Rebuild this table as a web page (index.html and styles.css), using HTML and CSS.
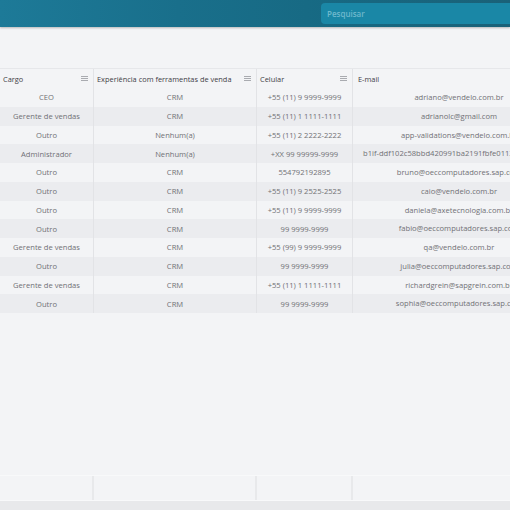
FILE: index.html
```html
<!DOCTYPE html>
<html lang="pt-BR">
<head>
<meta charset="utf-8">
<link rel="stylesheet" href="styles.css">
</head>
<body>
<header class="topbar">
  <div class="search"><span>Pesquisar</span></div>
</header>
<main class="content">
  <div class="grid">
    <div class="row head">
      <div class="cell c1"><span>Cargo</span><i class="menu"></i></div>
      <div class="cell c2"><span>Experiência com ferramentas de venda</span><i class="menu"></i></div>
      <div class="cell c3"><span>Celular</span><i class="menu"></i></div>
      <div class="cell c4"><span>E-mail</span></div>
    </div>
    <div class="row"><div class="cell c1">CEO</div><div class="cell c2">CRM</div><div class="cell c3">+55 (11) 9 9999-9999</div><div class="cell c4">adriano@vendelo.com.br</div></div>
    <div class="row alt"><div class="cell c1">Gerente de vendas</div><div class="cell c2">CRM</div><div class="cell c3">+55 (11) 1 1111-1111</div><div class="cell c4">adrianolc@gmail.com</div></div>
    <div class="row"><div class="cell c1">Outro</div><div class="cell c2">Nenhum(a)</div><div class="cell c3">+55 (11) 2 2222-2222</div><div class="cell c4">app-validations@vendelo.com.br</div></div>
    <div class="row alt"><div class="cell c1">Administrador</div><div class="cell c2">Nenhum(a)</div><div class="cell c3">+XX 99 99999-9999</div><div class="cell c4">b1if-ddf102c58bbd420991ba2191fbfe0113@vendelo.com.br</div></div>
    <div class="row"><div class="cell c1">Outro</div><div class="cell c2">CRM</div><div class="cell c3">554792192895</div><div class="cell c4">bruno@oeccomputadores.sap.com</div></div>
    <div class="row alt"><div class="cell c1">Outro</div><div class="cell c2">CRM</div><div class="cell c3">+55 (11) 9 2525-2525</div><div class="cell c4">caio@vendelo.com.br</div></div>
    <div class="row"><div class="cell c1">Outro</div><div class="cell c2">CRM</div><div class="cell c3">+55 (11) 9 9999-9999</div><div class="cell c4">daniela@axetecnologia.com.br</div></div>
    <div class="row alt"><div class="cell c1">Outro</div><div class="cell c2">CRM</div><div class="cell c3">99 9999-9999</div><div class="cell c4">fabio@oeccomputadores.sap.com</div></div>
    <div class="row"><div class="cell c1">Gerente de vendas</div><div class="cell c2">CRM</div><div class="cell c3">+55 (99) 9 9999-9999</div><div class="cell c4">qa@vendelo.com.br</div></div>
    <div class="row alt"><div class="cell c1">Outro</div><div class="cell c2">CRM</div><div class="cell c3">99 9999-9999</div><div class="cell c4">julia@oeccomputadores.sap.com</div></div>
    <div class="row"><div class="cell c1">Gerente de vendas</div><div class="cell c2">CRM</div><div class="cell c3">+55 (11) 1 1111-1111</div><div class="cell c4">richardgrein@sapgrein.com.br</div></div>
    <div class="row alt"><div class="cell c1">Outro</div><div class="cell c2">CRM</div><div class="cell c3">99 9999-9999</div><div class="cell c4">sophia@oeccomputadores.sap.com</div></div>
  </div>
  <div class="spacer"></div>
  <div class="row foot">
    <div class="cell c1"></div><div class="cell c2"></div><div class="cell c3"></div><div class="cell c4"></div>
  </div>
  <div class="bottombar"></div>
</main>
</body>
</html>
```
FILE: styles.css
```css
html, body {
  margin: 0;
  padding: 0;
}
body {
  width: 510px;
  height: 510px;
  overflow: hidden;
  background: #f3f4f6;
  font-family: "Open Sans", "Liberation Sans", sans-serif;
  display: flex;
  flex-direction: column;
}
.topbar {
  height: 27px;
  flex: none;
  background: linear-gradient(90deg, #1d7a98 0%, #196f8b 35%, #176a84 60%, #1a6178 100%);
  box-shadow: 0 1px 2px rgba(0,0,0,0.25);
  display: flex;
  justify-content: flex-end;
  align-items: flex-start;
  padding-top: 3px;
  box-sizing: border-box;
  position: relative;
  z-index: 1;
}
.search {
  width: 189px;
  height: 21px;
  background: #1a87a6;
  border-radius: 4px 0 0 4px;
  display: flex;
  align-items: center;
  padding-left: 6px;
  box-sizing: border-box;
}
.search span {
  color: #6fb8cc;
  font-size: 8px;
  font-weight: 600;
}
.content {
  flex: 1;
  display: flex;
  flex-direction: column;
  padding-top: 41px;
}
.grid {
  display: flex;
  flex-direction: column;
}
.row {
  display: flex;
  height: 18.75px;
}
.row.alt {
  background: #ebecef;
}
.row.head {
  height: 20px;
  border-top: 1px solid #e6e7ea;
  box-sizing: border-box;
}
.cell {
  box-sizing: border-box;
  display: flex;
  align-items: center;
  justify-content: center;
  font-size: 7.6px;
  color: #707075;
  white-space: nowrap;
  overflow: hidden;
  border-right: 1px solid #e2e3e6;
  padding: 0 6px;
  flex: none;
}
.c1 { width: 94px; }
.c2 { width: 163px; }
.c3 { width: 96px; }
.c4 { width: 212px; border-right: none; padding: 0 10px; }
.c4:not(:empty) { display: block; line-height: 18.75px; text-align: center; text-overflow: clip; }
.row.head .cell {
  display: flex;
  justify-content: space-between;
  color: #3f4046;
  font-weight: 500;
  font-size: 7.4px;
  line-height: normal;
  padding: 0 5px 0 3px;
}
.row.head .c4 { justify-content: flex-start; padding-left: 5px; }
.menu {
  width: 7px;
  height: 5px;
  border-top: 1px solid #a9abb0;
  border-bottom: 1px solid #a9abb0;
  position: relative;
  box-sizing: border-box;
  display: block;
  flex: none;
}
.menu::after {
  content: "";
  position: absolute;
  left: 0;
  right: 0;
  top: 1px;
  height: 1px;
  background: #a9abb0;
}
.spacer {
  flex: 1;
}
.row.foot {
  height: 24px;
  border-top: 1px solid #f8f9fa;
  border-bottom: 1px solid #f8f9fa;
  background: #f3f4f6;
  flex: none;
}
.row.foot .cell {
  border-right: 2px solid #e8e9eb;
}
.row.foot .c4 { border-right: none; }
.bottombar {
  height: 9px;
  background: #e8e9eb;
  flex: none;
}
```
